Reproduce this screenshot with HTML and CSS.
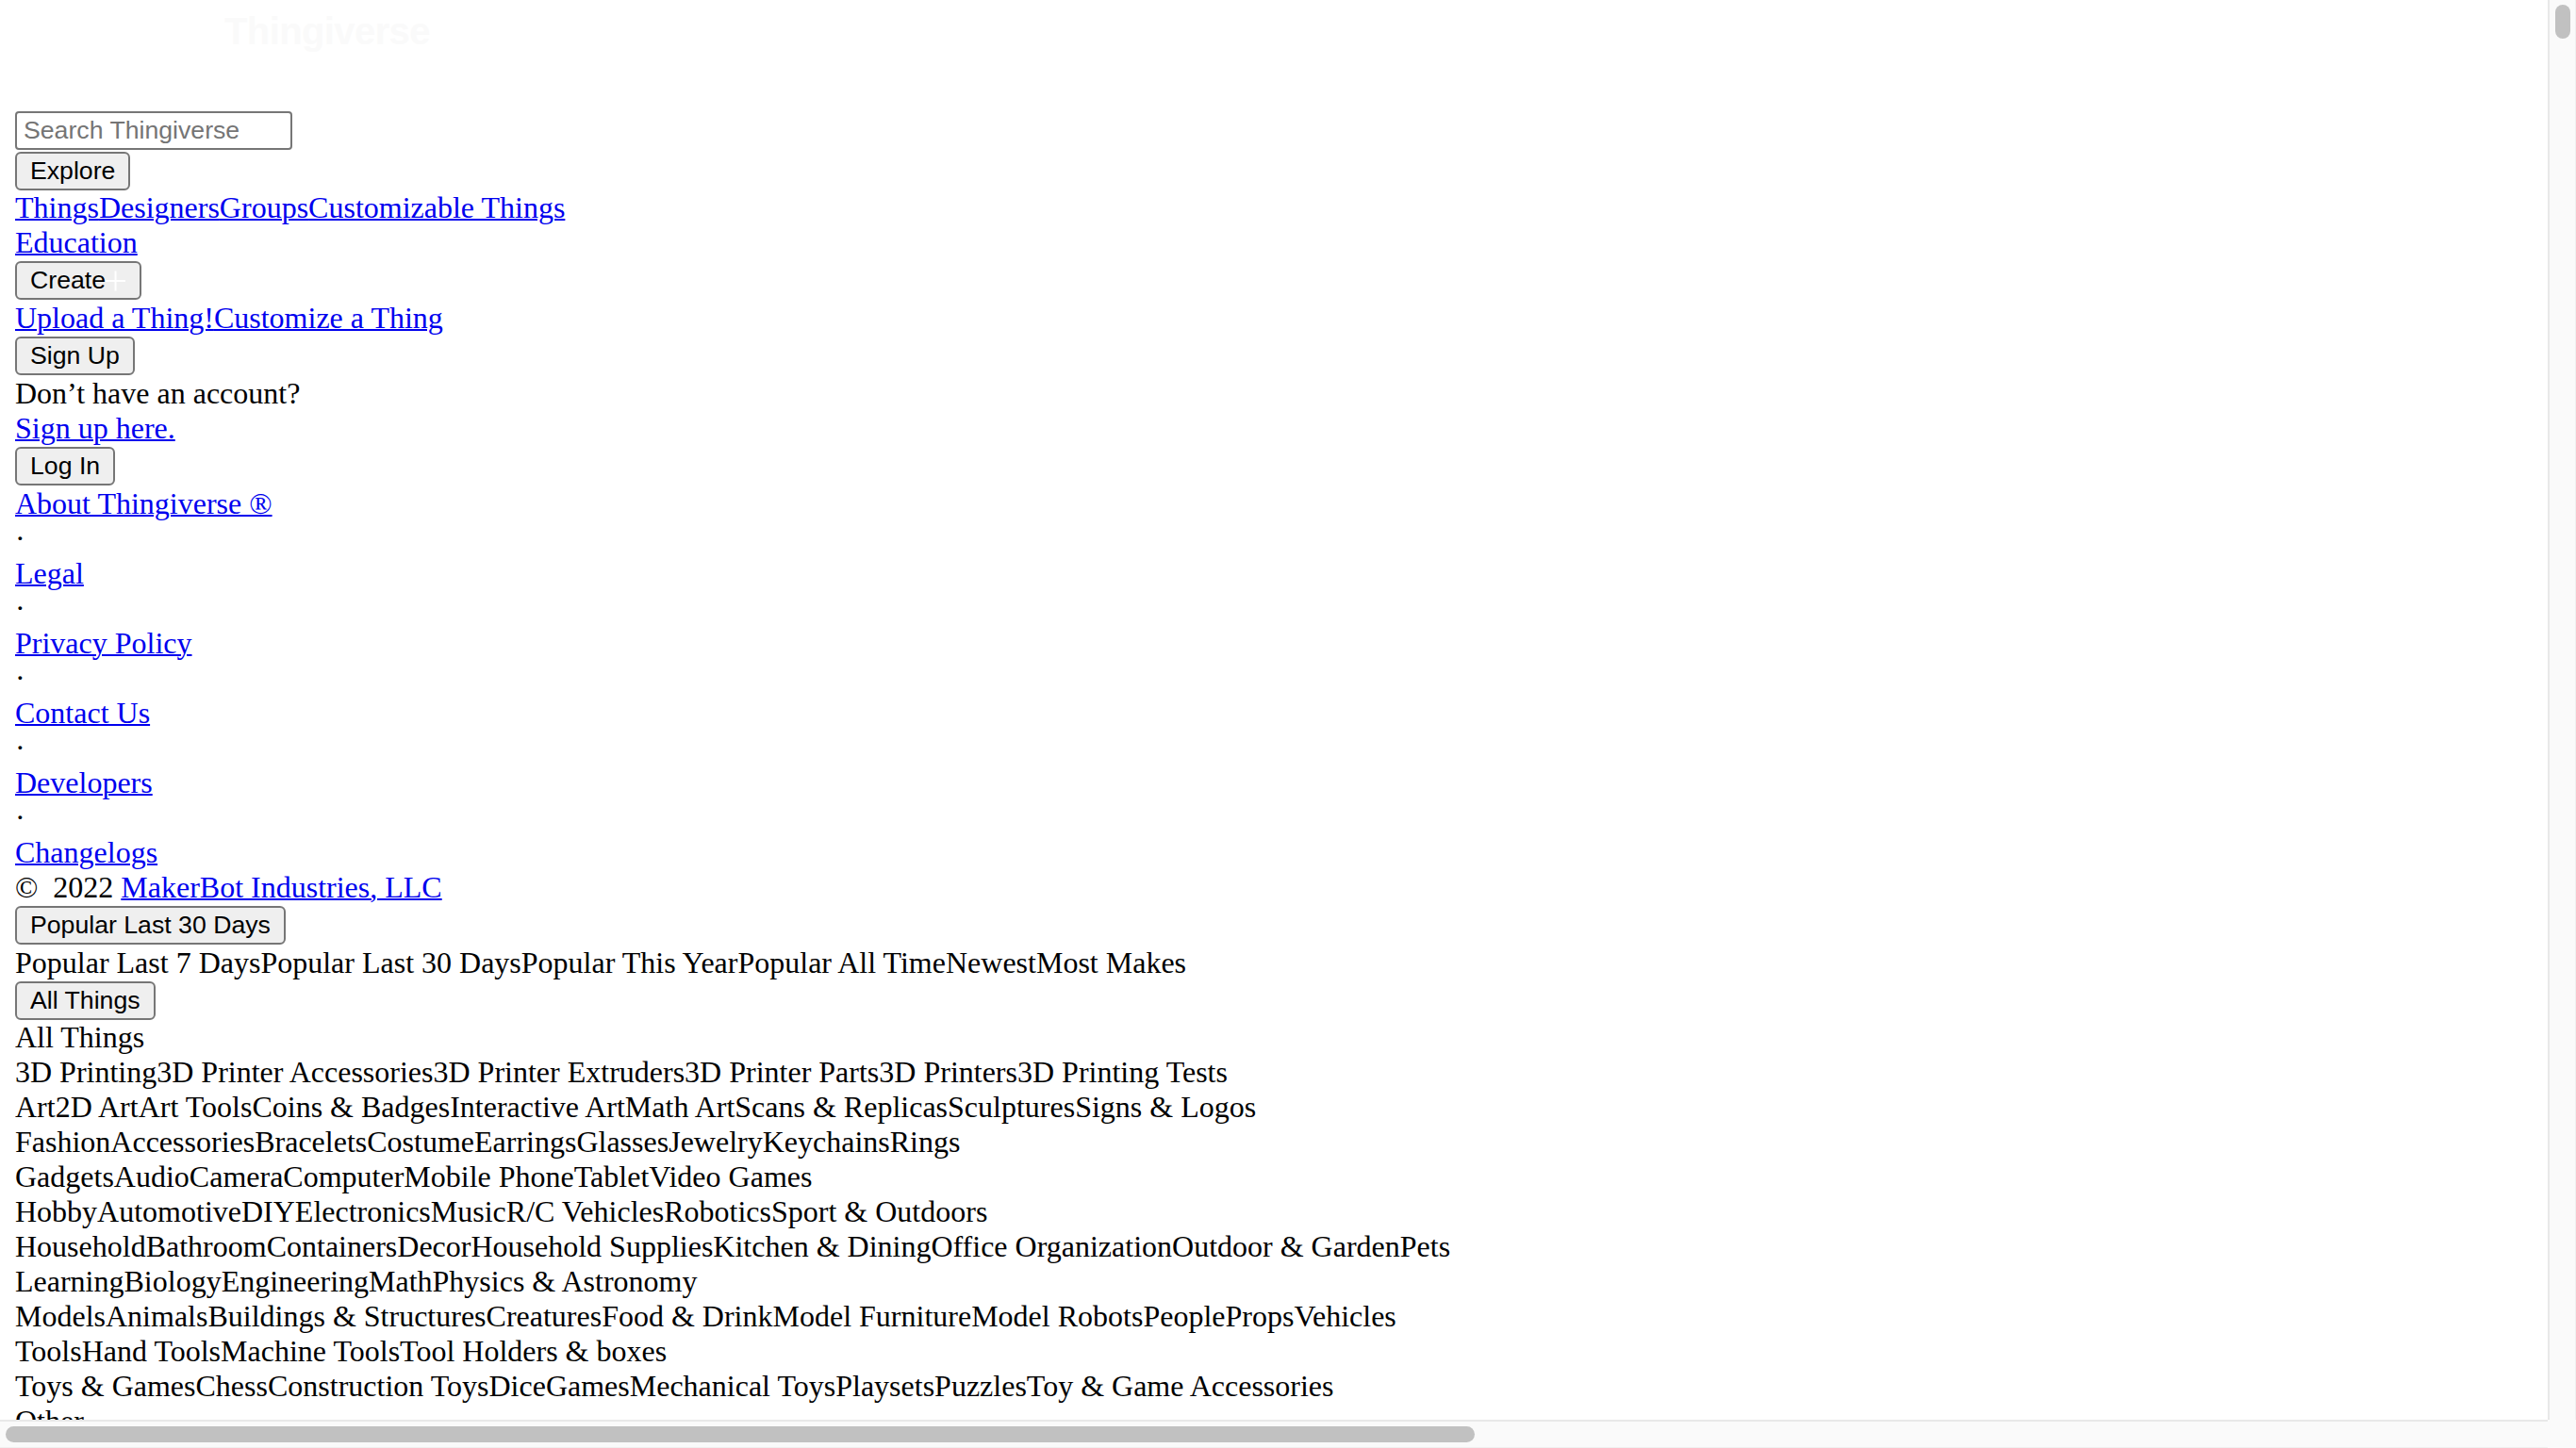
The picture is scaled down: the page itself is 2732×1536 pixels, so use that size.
FILE: index.html
```html
<!DOCTYPE html>
<html lang="en">
<head>
<meta charset="utf-8">
<title>Thingiverse</title>
<link rel="stylesheet" href="styles.css">
</head>
<body class="page">
<header class="site-header">
  <div class="logo-row"><a class="logo" href="#">Thingiverse</a></div>
  <form class="search-form">
    <div class="control-row"><input class="search" type="text" placeholder="Search Thingiverse"></div>
    <div class="control-row"><button class="btn" type="button">Explore</button></div>
  </form>
  <nav class="explore-nav">
    <div class="line"><a class="link" href="#">Things</a><a class="link" href="#">Designers</a><a class="link" href="#">Groups</a><a class="link" href="#">Customizable Things</a></div>
    <div class="line"><a class="link" href="#">Education</a></div>
  </nav>
  <div class="control-row tall"><button class="btn btn-create" type="button">Create<svg class="plus" width="21" height="22" viewBox="0 0 21 22" aria-hidden="true"><path d="M10.5 0.5V21.5M0 11H21" stroke="#ffffff" stroke-width="2" fill="none"/></svg></button></div>
  <div class="line"><a class="link" href="#">Upload a Thing!</a><a class="link" href="#">Customize a Thing</a></div>
  <div class="control-row tall"><button class="btn" type="button">Sign Up</button></div>
  <div class="line">Don’t have an account?</div>
  <div class="line"><a class="link" href="#">Sign up here.</a></div>
  <div class="control-row tall"><button class="btn" type="button">Log In</button></div>
</header>
<footer class="site-footer">
  <div class="line"><a class="link" href="#">About Thingiverse ®</a></div>
  <div class="line">·</div>
  <div class="line"><a class="link" href="#">Legal</a></div>
  <div class="line">·</div>
  <div class="line"><a class="link" href="#">Privacy Policy</a></div>
  <div class="line">·</div>
  <div class="line"><a class="link" href="#">Contact Us</a></div>
  <div class="line">·</div>
  <div class="line"><a class="link" href="#">Developers</a></div>
  <div class="line">·</div>
  <div class="line"><a class="link" href="#">Changelogs</a></div>
  <div class="line">©&nbsp; 2022 <a class="link" href="#">MakerBot Industries, LLC</a></div>
</footer>
<main class="content">
  <div class="control-row"><button class="btn" type="button">Popular Last 30 Days</button></div>
  <div class="line"><span>Popular Last 7 Days</span><span>Popular Last 30 Days</span><span>Popular This Year</span><span>Popular All Time</span><span>Newest</span><span>Most Makes</span></div>
  <div class="control-row"><button class="btn" type="button">All Things</button></div>
  <div class="line">All Things</div>
  <div class="line">3D Printing3D Printer Accessories3D Printer Extruders3D Printer Parts3D Printers3D Printing Tests</div>
  <div class="line">Art2D ArtArt ToolsCoins &amp; BadgesInteractive ArtMath ArtScans &amp; ReplicasSculpturesSigns &amp; Logos</div>
  <div class="line">FashionAccessoriesBraceletsCostumeEarringsGlassesJewelryKeychainsRings</div>
  <div class="line">GadgetsAudioCameraComputerMobile PhoneTabletVideo Games</div>
  <div class="line">HobbyAutomotiveDIYElectronicsMusicR/C VehiclesRoboticsSport &amp; Outdoors</div>
  <div class="line">HouseholdBathroomContainersDecorHousehold SuppliesKitchen &amp; DiningOffice OrganizationOutdoor &amp; GardenPets</div>
  <div class="line">LearningBiologyEngineeringMathPhysics &amp; Astronomy</div>
  <div class="line">ModelsAnimalsBuildings &amp; StructuresCreaturesFood &amp; DrinkModel FurnitureModel RobotsPeoplePropsVehicles</div>
  <div class="line">ToolsHand ToolsMachine ToolsTool Holders &amp; boxes</div>
  <div class="line">Toys &amp; GamesChessConstruction ToysDiceGamesMechanical ToysPlaysetsPuzzlesToy &amp; Game Accessories</div>
  <div class="line">Other</div>
  <div class="line">Other</div>
</main>
<div class="scrollbar-v"><div class="thumb-v"></div></div>
<div class="scrollbar-h"><div class="thumb-h"></div></div>
<div class="scroll-corner"></div>
</body>
</html>
```
FILE: styles.css
```css
html {
  overflow: hidden;
  background: #ffffff;
}

.page {
  margin: 16px;
  font-family: "Liberation Serif", "Times New Roman", serif;
  font-size: 32px;
  line-height: 37px;
  color: #000000;
}

.logo-row {
  height: 101px;
}

.logo {
  display: inline-block;
  margin-left: 222px;
  margin-top: -7px;
  font-family: "Liberation Sans", Arial, sans-serif;
  font-weight: bold;
  font-size: 40px;
  line-height: 48px;
  letter-spacing: -0.6px;
  color: #fafafa;
  text-decoration: none;
}

.search-form {
  margin: 0;
}

.control-row {
  height: 42.5px;
  display: flex;
  align-items: flex-start;
  padding-top: 1px;
  box-sizing: border-box;
}

.control-row.tall {
  height: 43px;
  padding-top: 1px;
}

.search {
  box-sizing: border-box;
  width: 294px;
  height: 41px;
  margin: 0;
  padding: 3px 7px;
  border: 2px solid #767676;
  border-radius: 4px;
  font-family: "Liberation Sans", Arial, sans-serif;
  font-size: 26.67px;
  line-height: 31px;
  color: #000000;
  background: #ffffff;
}

.search::placeholder {
  color: #757575;
}

.btn {
  display: inline-flex;
  align-items: center;
  box-sizing: border-box;
  height: 41px;
  margin: 0;
  padding: 3px 14px;
  border: 2px solid #767676;
  border-radius: 6px;
  background: #efefef;
  font-family: "Liberation Sans", Arial, sans-serif;
  font-size: 26.67px;
  line-height: 31px;
  color: #000000;
}

.btn-create {
  padding-right: 15px;
}

.plus {
  display: block;
  margin-left: 0;
}

.line {
  white-space: nowrap;
}

.link {
  color: #0000ee;
  text-decoration: underline;
  text-decoration-thickness: 2px;
}

.scrollbar-v {
  position: fixed;
  top: 0;
  right: 0;
  width: 30px;
  height: 1506px;
  box-sizing: border-box;
  background: #fafafa;
  border-left: 2px solid #e8e8e8;
  border-right: 1px solid #f0f0f0;
}

.thumb-v {
  width: 16px;
  height: 36px;
  margin: 5px 0 0 6px;
  border-radius: 8px;
  background: #c1c1c1;
}

.scrollbar-h {
  position: fixed;
  left: 0;
  bottom: 0;
  width: 2702px;
  height: 30px;
  box-sizing: border-box;
  background: #fafafa;
  border-top: 2px solid #e8e8e8;
  border-bottom: 1px solid #f0f0f0;
}

.thumb-h {
  width: 1558px;
  height: 17px;
  margin: 5px 0 0 6px;
  border-radius: 9px;
  background: #c1c1c1;
}

.scroll-corner {
  position: fixed;
  right: 0;
  bottom: 0;
  width: 30px;
  height: 30px;
  background: #fafafa;
}
```
